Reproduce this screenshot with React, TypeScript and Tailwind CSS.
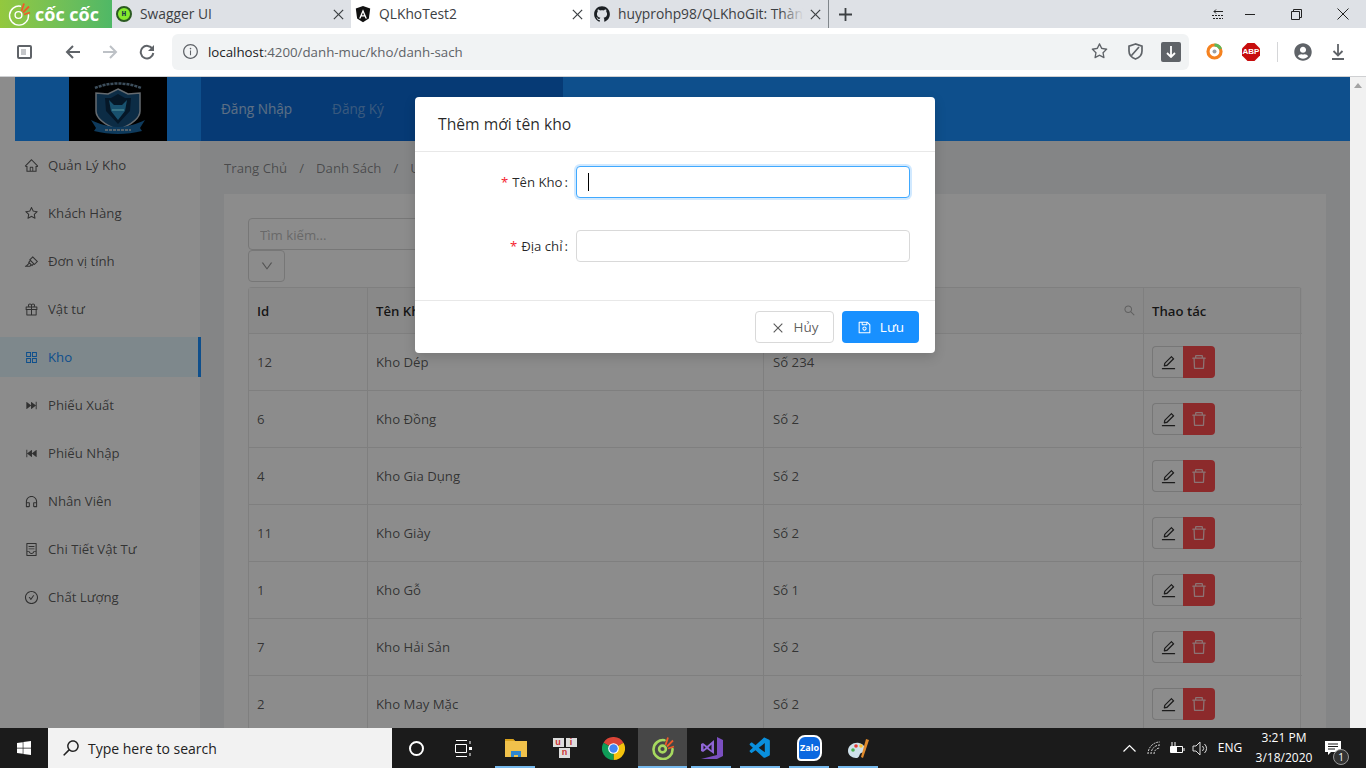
import {
  AiOutlineHome, AiOutlineStar, AiOutlineHighlight, AiOutlineGift, AiOutlineAppstore,
  AiFillFastForward, AiFillFastBackward, AiOutlineCustomerService, AiOutlineContainer,
  AiOutlineCheckCircle, AiOutlineEdit, AiOutlineDelete, AiOutlineSearch, AiOutlineDown,
  AiOutlineClose, AiOutlineSave, AiFillGithub, AiOutlineInfoCircle,
} from 'react-icons/ai';
import { FaWindows, FaUserCircle } from 'react-icons/fa';
import { VscVscode } from 'react-icons/vsc';

const MENU = [
  { label: 'Quản Lý Kho', icon: AiOutlineHome },
  { label: 'Khách Hàng', icon: AiOutlineStar },
  { label: 'Đơn vị tính', icon: AiOutlineHighlight },
  { label: 'Vật tư', icon: AiOutlineGift },
  { label: 'Kho', icon: AiOutlineAppstore, active: true },
  { label: 'Phiếu Xuất', icon: AiFillFastForward },
  { label: 'Phiếu Nhập', icon: AiFillFastBackward },
  { label: 'Nhân Viên', icon: AiOutlineCustomerService },
  { label: 'Chi Tiết Vật Tư', icon: AiOutlineContainer },
  { label: 'Chất Lượng', icon: AiOutlineCheckCircle },
];

const ROWS = [
  { id: 12, name: 'Kho Dép', address: 'Số 234' },
  { id: 6, name: 'Kho Đồng', address: 'Số 2' },
  { id: 4, name: 'Kho Gia Dụng', address: 'Số 2' },
  { id: 11, name: 'Kho Giày', address: 'Số 2' },
  { id: 1, name: 'Kho Gỗ', address: 'Số 1' },
  { id: 7, name: 'Kho Hải Sản', address: 'Số 2' },
  { id: 2, name: 'Kho May Mặc', address: 'Số 2' },
];

function CocCocMark({ size, weight }: { size: number; weight: number }) {
  return (
    <svg width={size} height={size} viewBox="0 0 24 24" fill="none">
      <path d="M13.500 4.200A9.500 9.500 0 1 0 21.500 13" stroke="currentColor" strokeWidth={weight} strokeLinecap="round" />
      <circle cx="11.500" cy="13" r="3.400" stroke="currentColor" strokeWidth={weight} />
      <path d="M14.500 9L17 1.500M16 10.500L22 4.500M17 12.500L23 10.500" stroke="#ef5a28" strokeWidth="1.800" />
    </svg>
  );
}

function ChromeLogo() {
  return (
    <svg width="23" height="23" viewBox="0 0 24 24">
      <path d="M12 12L1.6 6A12 12 0 0 1 22.4 6z" fill="#db4437" />
      <path d="M12 12L22.4 6A12 12 0 0 1 12 24z" fill="#f4c20d" />
      <path d="M12 12L12 24A12 12 0 0 1 1.6 6z" fill="#0f9d58" />
      <circle cx="12" cy="12" r="5.6" fill="#fff" />
      <circle cx="12" cy="12" r="4.4" fill="#4285f4" />
    </svg>
  );
}

function Tile({ children, underline, active }: { children: React.ReactNode; underline?: boolean; active?: boolean }) {
  return (
    <div className={`relative flex h-10 w-[49px] items-center justify-center ${active ? 'bg-[#474747]' : ''}`}>
      {children}
      {underline && (
        <div className={`absolute bottom-0 h-[2px] bg-[#76b9ed] ${active ? 'right-0 left-0' : 'right-[5px] left-[4px]'}`} />
      )}
    </div>
  );
}

function Tab({ title, icon, active, divider }: { title: string; icon: React.ReactNode; active?: boolean; divider?: boolean }) {
  return (
    <div className={`flex h-7 w-[239px] items-center pr-[5px] pl-[2px] ${active ? 'bg-white' : ''} ${divider ? 'border-r border-[#80868b]' : ''}`}>
      <div className="flex w-5 shrink-0 items-center justify-center">{icon}</div>
      <div className={`relative ml-[6px] flex-1 overflow-hidden text-[13.800px] whitespace-nowrap text-[#3c4043]`}>
        {title}
        {divider && <div className="absolute top-0 right-0 bottom-0 w-[24px] bg-gradient-to-r from-[#dee1e6]/0 to-[#dee1e6]" />}
      </div>
      <AiOutlineClose className="ml-1 shrink-0 text-[#3c4043]" size={15} />
    </div>
  );
}

function Chrome() {
  return (
    <div className="shrink-0">
      <div className="flex h-7 items-center bg-[#dee1e6]">
        <div className="flex h-7 w-[112px] items-center gap-[4px] bg-gradient-to-r from-[#93c83e] to-[#4fb866] pl-[7px] text-white">
          <CocCocMark size={24} weight={1.400} />
          <span className="text-[18px] font-bold">cốc cốc</span>
        </div>
        <Tab
          title="Swagger UI"
          icon={
            <div className="flex h-4 w-4 items-center justify-center rounded-full border-2 border-[#2b5a22] bg-[#85ea2d] font-['Liberation_Mono',monospace] text-[8px] font-bold text-[#173647]">
              H
            </div>
          }
        />
        <Tab
          title="QLKhoTest2"
          active
          icon={
            <svg width="16" height="17" viewBox="0 0 24 26">
              <path d="M12 0L1 4l2 15 9 6 9-6 2-15z" fill="#111" />
              <path d="M12 5L6 19h2.3l1.2-3h5l1.2 3H18zM10.4 14L12 10l1.6 4z" fill="#fff" />
            </svg>
          }
        />
        <Tab title="huyprohp98/QLKhoGit: Thành" icon={<AiFillGithub className="text-[#1b1f23]" size={18} />} divider />
        <svg className="ml-[10px]" width="13" height="13" viewBox="0 0 13 13" stroke="#3c4043" strokeWidth="1.8">
          <path d="M6.5 0v13M0 6.5h13" />
        </svg>
        <div className="flex-1" />
        <svg width="12" height="10" viewBox="0 0 12 10" stroke="#222" strokeWidth="1" fill="none">
          <path d="M11 2.500H2M4 .5L2 2.500 4 4.500" />
          <path d="M0 6.500h11M1 9.500h10" strokeDasharray="2 1" />
        </svg>
        <div className="w-[21px]" />
        <div className="h-px w-[10px] bg-[#222]" />
        <div className="w-[36px]" />
        <svg width="11" height="11" viewBox="0 0 11 11" stroke="#222" fill="none">
          <path d="M.5 2.5h8v8h-8zM2.5 2.5v-2h8v8h-2" />
        </svg>
        <div className="w-[35px]" />
        <svg width="12" height="12" viewBox="0 0 12 12" stroke="#222">
          <path d="M.5.5l11 11M11.500.5l-11 11" />
        </svg>
        <div className="w-[17px]" />
      </div>
      <div className="flex h-[49px] items-center border-b border-[#cfd0d2] bg-white pb-[1px]">
        <div className="flex w-[48px] justify-center">
          <div className="flex h-[14px] w-[15px] items-center rounded-[2px] border-2 border-[#5f6368] pl-[2px]">
            <div className="h-[6px] w-[5px] bg-[#c4c6c9]" />
          </div>
        </div>
        <div className="flex w-[50px] justify-center">
          <svg width="16" height="14" viewBox="0 0 16 14" fill="none" stroke="#5f6368" strokeWidth="2">
            <path d="M15 7H2.500M8 1L2 7l6 6" />
          </svg>
        </div>
        <div className="flex w-[24px] justify-center">
          <svg width="16" height="14" viewBox="0 0 16 14" fill="none" stroke="#bdc1c6" strokeWidth="2">
            <path d="M1 7h12.500M8 1l6 6-6 6" />
          </svg>
        </div>
        <div className="flex w-[50px] justify-center">
          <svg width="16" height="16" viewBox="0 0 16 16" fill="none">
            <path d="M13.500 5A6.300 6.300 0 1 0 14.300 9" stroke="#5f6368" strokeWidth="2" />
            <path d="M15 1v6H9z" fill="#5f6368" />
          </svg>
        </div>
        <div className="flex h-[36px] w-[1017px] items-center rounded-md bg-[#f1f3f4]">
          <AiOutlineInfoCircle className="ml-[10px] text-[#5f6368]" size={17} />
          <span className="ml-[9px] pt-[2px] text-[13.300px] text-[#5f6368]">
            <span className="text-[#202124]">localhost</span>:4200/danh-muc/kho/danh-sach
          </span>
          <div className="flex-1" />
          <AiOutlineStar className="text-[#5f6368]" size={19} />
          <svg className="ml-[19px]" width="15" height="17" viewBox="0 0 15 17" fill="none" stroke="#5f6368" strokeWidth="1.7">
            <path d="M7.500 1L1 3.200v4.800c0 4 3 6.800 6.500 8 3.500-1.200 6.500-4 6.500-8V3.200zM3.500 12.500L11 4" />
          </svg>
          <div className="mr-[8px] ml-[18px] flex h-5 w-5 items-center justify-center rounded-[2px] bg-[#5f6368]">
            <svg width="10" height="12" viewBox="0 0 10 12" fill="none" stroke="#fff" strokeWidth="1.800">
              <path d="M5 0v11M1 7l4 4 4-4" />
            </svg>
          </div>
        </div>
        <div className="ml-[17px] flex w-[17px] justify-center">
          <svg width="17" height="17" viewBox="0 0 17 17" fill="none" strokeWidth="3.200">
            <circle cx="8.500" cy="8.500" r="6.500" stroke="#f58220" />
            <path d="M8.500 2a6.500 6.500 0 0 1 6 4" stroke="#5cb85c" />
            <circle cx="8.500" cy="8.500" r="2" fill="#9aa0a6" stroke="none" />
          </svg>
        </div>
        <div className="relative ml-[19px] flex h-[18px] w-[18px] items-center justify-center">
          <svg className="absolute inset-0" width="18" height="18" viewBox="0 0 18 18">
            <path d="M5.500 0h7L18 5.500v7L12.500 18h-7L0 12.500v-7z" fill="#c70d0d" />
          </svg>
          <span className="relative font-['Liberation_Sans',sans-serif] text-[8px] font-bold text-white">ABP</span>
        </div>
        <div className="ml-[17px] h-5 w-px bg-[#d5d6d8]" />
        <FaUserCircle className="ml-[16px] text-[#5f6368]" size={18} />
        <svg className="ml-[20px]" width="12" height="16" viewBox="0 0 12 16" fill="none" stroke="#5f6368" strokeWidth="1.800">
          <path d="M6 0v11M1.500 7L6 11.500 10.500 7M0 15h12" />
        </svg>
      </div>
    </div>
  );
}

function Logo() {
  return (
    <div className="ml-[54px] flex h-16 w-[98px] shrink-0 items-center justify-center bg-black">
      <svg width="98" height="64" viewBox="0 0 98 64" fill="none">
        <path d="M26 11c14-6 32-6 46 0" stroke="#6f8fa8" strokeWidth="2.500" strokeDasharray="3 1" />
        <path d="M49 12l10 5 12-1v18c0 8-12 15-22 19-10-4-22-11-22-19V16l12 1z" fill="#17507f" stroke="#b9c4cc" strokeWidth="1.500" />
        <path d="M49 17l7 4 6 0-1 13-12 13-12-13-1-13 6 0z" fill="#0a2a48" />
        <path d="M40 23l5 5h8l5-5-2 11-7 9-7-9z" fill="#2c94c8" />
        <path d="M43 33h12" stroke="#67d4f5" strokeWidth="2" />
        <path d="M22 43c8 4 18 7 27 7s19-3 27-7l-5 8 2 3c-8 2-16 3-24 3s-16-1-24-3l2-3z" fill="#1a6aa8" />
        <path d="M36 53h26" stroke="#9fb4c4" strokeWidth="2" strokeDasharray="3 1" />
      </svg>
    </div>
  );
}

function Header() {
  return (
    <div className="ml-[15px] flex h-16 shrink-0 bg-[#1b91ff]">
      <Logo />
      <div className="ml-[34px] flex w-[362px] items-center bg-[#0b6ad5] pl-[20px] text-[13.600px]">
        <span className="text-white/65">Đăng Nhập</span>
        <span className="ml-[40px] text-white/40">Đăng Ký</span>
      </div>
    </div>
  );
}

function Sidebar() {
  return (
    <div className="flex w-[200px] shrink-0 flex-col gap-2 bg-white pt-1">
      {MENU.map((item) => (
        <div
          key={item.label}
          className={`flex h-10 shrink-0 items-center pl-[24px] text-[13.200px] ${
            item.active ? 'relative z-10 -mr-px border-r-[3px] border-[#1b91ff] bg-[#e6f7ff] text-[#1890ff]' : 'text-black/65'
          }`}
        >
          <item.icon size={15} className="h-[15px] w-[15px]" />
          <span className="ml-[9px] pt-[2px]">{item.label}</span>
        </div>
      ))}
    </div>
  );
}

function Table() {
  return (
    <div className="mt-[5px] rounded-t border-t border-l border-[#e8e8e8] text-[13.200px] text-black/65">
      <div className="flex h-[46px] items-center border-b border-[#e8e8e8] bg-[#fafafa] font-semibold text-black/85">
        <div className="flex h-full w-[119px] items-center border-r border-[#e8e8e8] pt-[2px] pl-2">Id</div>
        <div className="flex h-full w-[396px] items-center border-r border-[#e8e8e8] pt-[2px] pl-2">Tên Kho</div>
        <div className="flex h-full w-[380px] items-center justify-end border-r border-[#e8e8e8] pr-[7px]">
          <AiOutlineSearch className="text-black/30" size={13} />
        </div>
        <div className="flex h-full w-[157px] items-center border-r border-[#e8e8e8] pt-[2px] pl-2">Thao tác</div>
      </div>
      {ROWS.map((row) => (
        <div key={row.id} className="flex h-[57px] items-center border-b border-[#e8e8e8]">
          <div className="flex h-full w-[119px] items-center border-r border-[#e8e8e8] pt-[2px] pl-2">{row.id}</div>
          <div className="flex h-full w-[396px] items-center border-r border-[#e8e8e8] pt-[2px] pl-2">{row.name}</div>
          <div className="flex h-full w-[380px] items-center border-r border-[#e8e8e8] pt-[2px] pl-[9px]">{row.address}</div>
          <div className="flex h-full w-[157px] items-center border-r border-[#e8e8e8] pl-2">
            <div className="flex h-8 w-[31px] items-center justify-center rounded-l border border-r-0 border-[#d9d9d9] bg-white text-black/80">
              <AiOutlineEdit size={17} />
            </div>
            <div className="flex h-8 w-[32px] items-center justify-center rounded-r bg-[#ff4d4f] text-white/75">
              <AiOutlineDelete size={18} />
            </div>
          </div>
        </div>
      ))}
    </div>
  );
}

function Content() {
  return (
    <div className="min-w-0 flex-1 overflow-hidden bg-[#f0f2f5] px-6">
      <div className="flex h-[53px] items-center gap-[12px] pt-[2px] text-[13.200px] text-black/45">
        <span>Trang Chủ</span>
        <span>/</span>
        <span>Danh Sách</span>
        <span>/</span>
        <span>Ưu</span>
      </div>
      <div className="bg-white px-6 pt-[24px]">
        <input
          readOnly
          placeholder="Tìm kiếm..."
          className="block h-8 w-[300px] rounded border border-[#d9d9d9] bg-white px-[11px] pt-[2px] text-[13.200px] outline-none placeholder:text-[#bfbfbf]"
        />
        <div className="flex h-8 w-[37px] items-center justify-center rounded border border-[#d9d9d9] bg-white text-black/40">
          <AiOutlineDown size={14} />
        </div>
        <Table />
      </div>
    </div>
  );
}

function FormRow({ label, focused }: { label: string; focused?: boolean }) {
  return (
    <div className="flex h-8 items-center">
      <div className="w-[153px] pt-[1px] text-right text-[13.200px] text-black/85">
        <span className="mr-[4px] text-[#f5222d]">*</span>
        {label}
        <span className="ml-[2px]">:</span>
      </div>
      <div
        className={`ml-[8px] flex h-8 w-[334px] items-center rounded border bg-white ${
          focused ? 'border-[#40a9ff] shadow-[0_0_0_2px_rgba(24,144,255,0.2)]' : 'border-[#d9d9d9]'
        }`}
      >
        {focused && <div className="ml-[11px] h-[18px] w-px bg-black" />}
      </div>
    </div>
  );
}

function Modal() {
  return (
    <div className="absolute top-[20px] left-[415px] z-30 w-[520px] rounded bg-white shadow-[0_4px_12px_rgba(0,0,0,0.15)]">
      <div className="flex h-[55px] items-center border-b border-[#e8e8e8] pt-[2px] pl-[23px] text-[15.700px] font-medium text-black/85">
        Thêm mới tên kho
      </div>
      <div className="flex h-[149px] flex-col gap-8 border-b border-[#e8e8e8] pt-[14px]">
        <FormRow label="Tên Kho" focused />
        <FormRow label="Địa chỉ" />
      </div>
      <div className="flex h-[52px] items-center justify-end gap-2 pr-[16px]">
        <div className="flex h-8 w-[79px] items-center justify-center gap-[9px] rounded border border-[#d9d9d9] bg-white pt-[1px] text-[13.500px] text-black/65">
          <AiOutlineClose size={14} />
          Hủy
        </div>
        <div className="flex h-8 w-[77px] items-center justify-center gap-[8px] rounded bg-[#1890ff] pt-[1px] text-[13.500px] text-white">
          <AiOutlineSave size={15} />
          Lưu
        </div>
      </div>
    </div>
  );
}

function Taskbar() {
  return (
    <div className="flex h-10 shrink-0 items-center bg-[#1b1b1b] text-white">
      <div className="flex h-10 w-[48px] items-center justify-center">
        <FaWindows size={16} />
      </div>
      <div className="flex h-10 w-[344px] items-center bg-[#f2f2f2] pl-[13px] text-[#222]">
        <AiOutlineSearch size={20} className="-scale-x-100" />
        <span className="ml-[7px] text-[14px]">Type here to search</span>
      </div>
      <div className="flex w-[49px] justify-center">
        <div className="h-[15px] w-[15px] rounded-full border-2 border-white" />
      </div>
      <div className="flex w-[50px] justify-center pr-[5px]">
        <svg width="17" height="17" viewBox="0 0 17 17" fill="none" stroke="#fff">
          <path d="M1 .5h11M1 16.500h11M.5 4.500h11v8H.5zM15 1v3M15 13v3" />
          <rect x="14" y="7" width="3" height="3" fill="#fff" stroke="none" />
        </svg>
      </div>
      <Tile underline>
        <svg width="22" height="22" viewBox="0 0 22 22">
          <path d="M0 2h8l2 2h12v16H0z" fill="#f0c14b" />
          <path d="M0 2h8l2 2H0z" fill="#d9a21b" />
          <path d="M6 14h10v6h-3v-2H9v2H6z" fill="#2f86cf" />
        </svg>
      </Tile>
      <Tile>
        <div className="flex w-[24px] flex-col items-center gap-[1px] font-['Liberation_Sans',sans-serif] text-[9px] leading-[9px] font-bold text-[#c33]">
          <div className="flex gap-[2px]">
            <span className="h-[9px] w-[11px] bg-[#ddd] text-center">u</span>
            <span className="h-[9px] w-[11px] bg-[#ddd] text-center">i</span>
          </div>
          <span className="h-[10px] w-[11px] bg-[#ddd] text-center">n</span>
        </div>
      </Tile>
      <Tile>
        <ChromeLogo />
      </Tile>
      <Tile underline active>
        <div className="text-[#a6d95f]">
          <CocCocMark size={24} weight={2.600} />
        </div>
      </Tile>
      <Tile underline>
        <svg width="24" height="24" viewBox="0 0 24 24">
          <path d="M17 1l6 3v16l-6 3H1l16-4V1z" fill="#7b4fc0" />
          <path d="M1 8l2-1 4 3 7-6v14l-7-5-4 3-2-1zM3.500 9.500v4l2.200-2zM11.500 8.500l-3 3 3 3z" fill="#8f66d6" fillRule="evenodd" />
        </svg>
      </Tile>
      <Tile underline>
        <VscVscode className="text-[#0a8fdc]" size={25} />
      </Tile>
      <Tile underline>
        <div className="flex h-[26px] w-[25px] items-center justify-center rounded-[8px] rounded-bl-[4px] border-2 border-white bg-[#0b68e0] text-[9px] font-bold text-white">
          Zalo
        </div>
      </Tile>
      <Tile underline>
        <svg width="25" height="25" viewBox="0 0 25 25">
          <path d="M2 15c0-6 6-9 11-8 5 1 7 5 6 8-1 2-4 1-5 3s-1 4-4 4c-4 0-8-3-8-7z" fill="#cfe0ea" />
          <circle cx="7" cy="14" r="1.800" fill="#4caf50" />
          <circle cx="10" cy="10" r="1.800" fill="#e53935" />
          <circle cx="15" cy="10" r="1.800" fill="#fbc02d" />
          <path d="M20 3l3 1-6 18-2-1z" fill="#e08a2c" />
        </svg>
      </Tile>
      <div className="flex-1" />
      <svg width="13" height="8" viewBox="0 0 13 8" fill="none" stroke="#fff" strokeWidth="1.200">
        <path d="M.500 7.500L6.500 1.500l6 6" />
      </svg>
      <svg className="ml-[11px]" width="14" height="14" viewBox="0 0 14 14" fill="none" stroke="#ddd">
        <path d="M1 13a12 12 0 0 1 12-12M4 13a9 9 0 0 1 9-9M7 13a6 6 0 0 1 6-6" strokeDasharray="2 1" />
      </svg>
      <svg className="ml-[8px]" width="16" height="14" viewBox="0 0 16 14" fill="none" stroke="#fff">
        <path d="M1.500 5.500h12v6h-12zM15 7v3M3 1v4M6 1v4" />
        <rect x="2" y="6" width="6" height="5" fill="#fff" stroke="none" />
      </svg>
      <svg className="ml-[7px]" width="16" height="15" viewBox="0 0 16 15" fill="none" stroke="#ddd">
        <path d="M1 5h3l4-4v13l-4-4H1zM10.500 5a3.500 3.500 0 0 1 0 5M12.500 3a6 6 0 0 1 0 9" />
      </svg>
      <span className="ml-[7px] w-[30px] text-center text-[12px]">ENG</span>
      <div className="ml-[3px] w-[72px] text-center text-[12px] leading-[20px]">
        <div>3:21 PM</div>
        <div>3/18/2020</div>
      </div>
      <div className="relative mt-[13px] mr-[17px] ml-[5px] h-[24px] w-[24px] self-start">
        <svg className="absolute top-0 left-0" width="16" height="15" viewBox="0 0 16 15">
          <path d="M0 0h16v11H6l-3 3v-3H0z" fill="#fff" />
          <path d="M3 3h10M3 5.500h10M3 8h7" stroke="#1b1b1b" />
        </svg>
        <div className="absolute right-0 bottom-0 flex h-4 w-4 items-center justify-center rounded-full border border-[#999] bg-[#333] text-[10px]">
          1
        </div>
      </div>
    </div>
  );
}

export default function App() {
  return (
    <div className="flex h-screen w-full flex-col overflow-hidden bg-white font-['Open_Sans','Noto_Sans',sans-serif]">
      <Chrome />
      <div className="flex min-h-0 flex-1">
        <div className="relative flex w-[1350px] shrink-0 flex-col">
          <Header />
          <div className="flex min-h-0 flex-1">
            <Sidebar />
            <Content />
          </div>
          <div className="absolute inset-0 z-20 bg-black/45" />
          <Modal />
        </div>
        <div className="flex w-4 justify-center bg-[#f1f1f1] pt-[6px]">
          <div className="h-0 w-0 border-x-[4px] border-b-[5px] border-x-transparent border-b-[#a3a3a3]" />
        </div>
      </div>
      <Taskbar />
    </div>
  );
}
